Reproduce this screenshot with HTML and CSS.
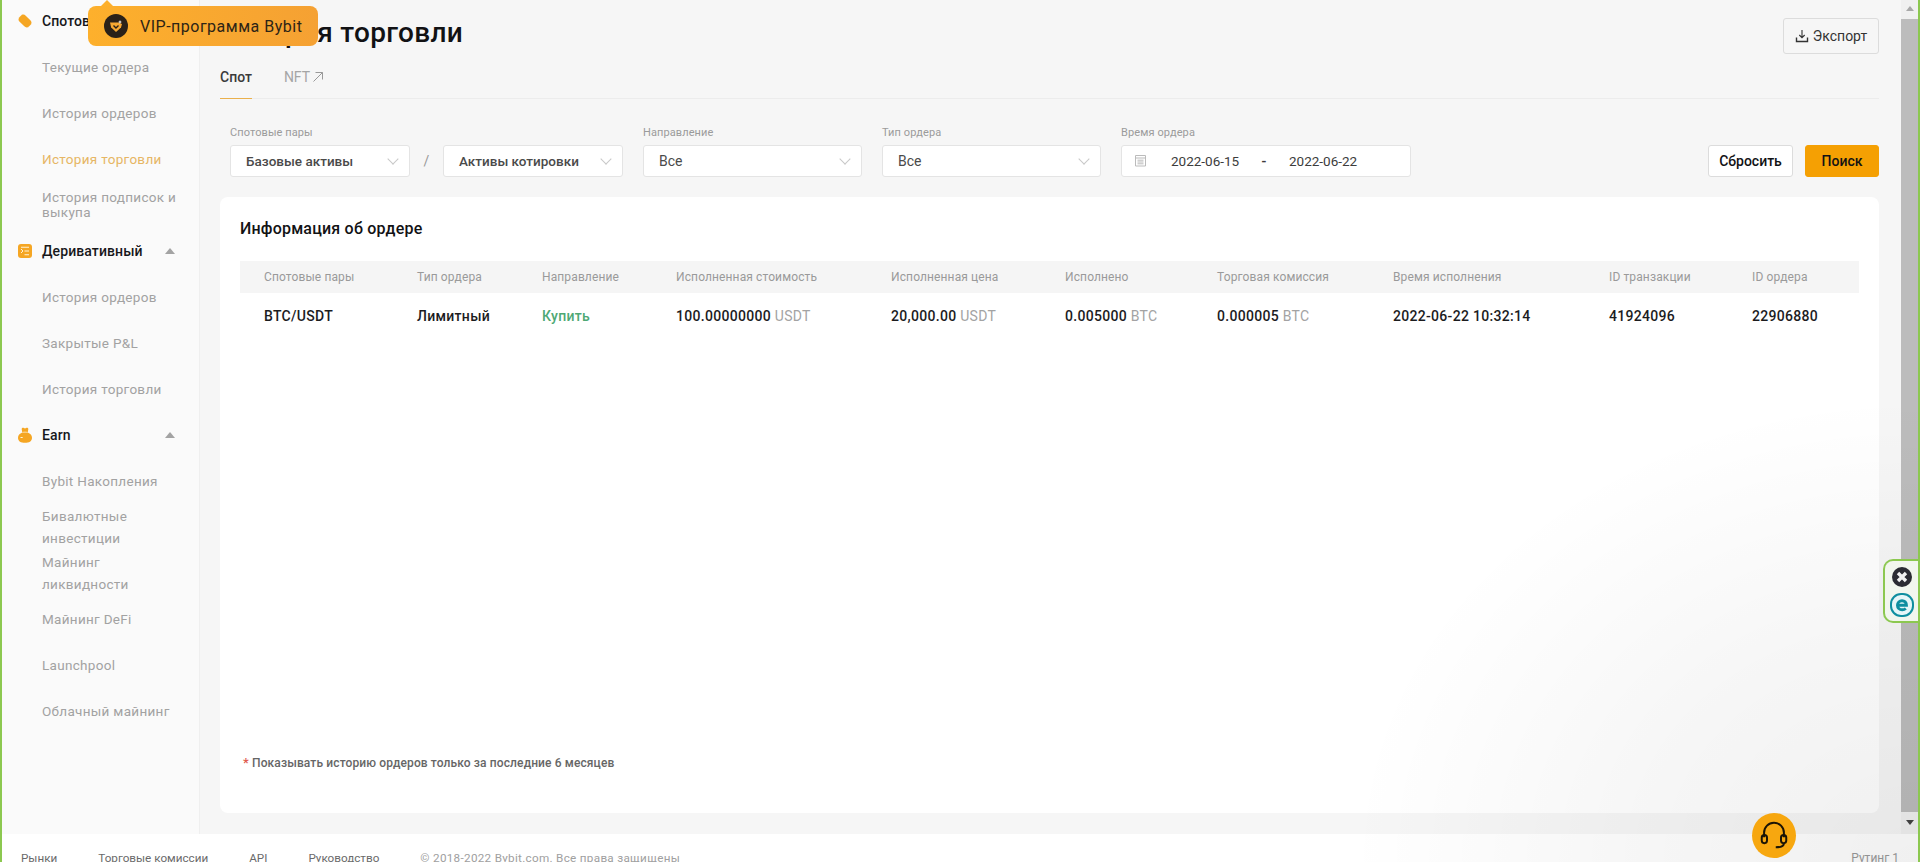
FILE: index.html
```html
<!DOCTYPE html>
<html lang="ru">
<head>
<meta charset="utf-8">
<title>История торговли</title>
<link rel="stylesheet" href="styles.css">
</head>
<body>
<div class="app">
  <div class="workspace">
    <aside class="sidebar">
      <div class="nav-head">
        <svg class="nav-icon" viewBox="0 0 14 16"><g fill="#f5a623"><rect x="0.500" y="3.700" width="13" height="8.600" rx="3.200" transform="rotate(45 7 8)"/><path d="M1.300 5.800 5 2 4.200 1.200.500 5zM12.700 10.200 9 14l.8.8L13.500 11z" opacity=".6"/></g></svg>
        <span>Спотовый</span>
      </div>
      <a class="nav-item">Текущие ордера</a>
      <a class="nav-item">История ордеров</a>
      <a class="nav-item active">История торговли</a>
      <a class="nav-item tight">История подписок и выкупа</a>
      <div class="nav-head">
        <svg class="nav-icon" viewBox="0 0 14 14"><rect width="14" height="14" rx="3" fill="#f5a623"/><path d="M3 5l2 2-2 2" fill="none" stroke="#fff3d6" stroke-width="1"/><path d="M3 3.200h8M6.500 7h4.500M6.500 10.800h4.500" stroke="#fff3d6" stroke-width="1.100"/></svg>
        <span>Деривативный</span>
        <i class="caret"></i>
      </div>
      <a class="nav-item">История ордеров</a>
      <a class="nav-item">Закрытые P&amp;L</a>
      <a class="nav-item">История торговли</a>
      <div class="nav-head">
        <svg class="nav-icon" viewBox="0 0 14 16"><path d="M4.300 5.500 3.700 2.200C3.500 1 4.600.4 5.500.800L7 1.400 8.500.800C9.400.4 10.500 1 10.300 2.200L9.700 5.500C12.300 6.500 14 8.300 14 10.700 14 14.300 11 15.800 7 15.800S0 14.300 0 10.700C0 8.300 1.700 6.500 4.300 5.500Z" fill="#f5a623"/><path d="M4.500 5.500C6 5 8 5 9.500 5.500" stroke="#fff3d6" stroke-width=".8" fill="none"/><path d="M2.500 10.500h2.200" stroke="#fff3d6"/></svg>
        <span>Earn</span>
        <i class="caret"></i>
      </div>
      <a class="nav-item">Bybit Накопления</a>
      <a class="nav-item loose">Бивалютные инвестиции</a>
      <a class="nav-item loose">Майнинг ликвидности</a>
      <a class="nav-item">Майнинг DeFi</a>
      <a class="nav-item">Launchpool</a>
      <a class="nav-item">Облачный майнинг</a>
    </aside>

    <main class="main">
      <header class="page-head">
        <h1 class="page-title">История торговли</h1>
        <button class="btn btn-export">
          <svg class="export-icon" viewBox="0 0 14 14"><path d="M7 1v7.500M4.300 6 7 8.700 9.700 6" fill="none" stroke="#333" stroke-width="1.100"/><path d="M1.500 8.500V12.500H12.500V8.500" fill="none" stroke="#333" stroke-width="1.400"/></svg>
          Экспорт
        </button>
      </header>

      <nav class="tabs">
        <a class="tab current">Спот</a>
        <a class="tab">NFT
          <svg class="tab-arrow" viewBox="0 0 12 12"><path d="M1.500 10.500 10.500 1.500M3.500 1.500h7v7" fill="none" stroke="#999" stroke-width="1"/></svg>
        </a>
      </nav>

      <section class="filters">
        <div class="field">
          <label class="field-label">Спотовые пары</label>
          <div class="pair">
            <div class="select strong"><span>Базовые активы</span><i class="chevron"></i></div>
            <span class="slash">/</span>
            <div class="select strong"><span>Активы котировки</span><i class="chevron"></i></div>
          </div>
        </div>
        <div class="field">
          <label class="field-label">Направление</label>
          <div class="select wide"><span>Все</span><i class="chevron"></i></div>
        </div>
        <div class="field">
          <label class="field-label">Тип ордера</label>
          <div class="select wide"><span>Все</span><i class="chevron"></i></div>
        </div>
        <div class="field">
          <label class="field-label">Время ордера</label>
          <div class="date-range">
            <svg class="cal-icon" viewBox="0 0 13 13"><path d="M1.500 1.500h10v10.500h-10zM1.500 4h10M3.500 6.200h6M3.500 8h6M3.500 9.800h6" fill="none" stroke="#bbb" stroke-width="1"/></svg>
            <span class="date">2022-06-15</span>
            <span class="date-sep">-</span>
            <span class="date">2022-06-22</span>
          </div>
        </div>
        <div class="actions">
          <button class="btn btn-reset">Сбросить</button>
          <button class="btn btn-search">Поиск</button>
        </div>
      </section>

      <section class="card">
        <h2 class="card-title">Информация об ордере</h2>
        <div class="row row-head">
          <span>Спотовые пары</span><span>Тип ордера</span><span>Направление</span><span>Исполненная стоимость</span><span>Исполненная цена</span><span>Исполнено</span><span>Торговая комиссия</span><span>Время исполнения</span><span>ID транзакции</span><span>ID ордера</span>
        </div>
        <div class="row row-body">
          <span>BTC/USDT</span><span>Лимитный</span><span class="buy">Купить</span><span>100.00000000 <em>USDT</em></span><span>20,000.00 <em>USDT</em></span><span>0.005000 <em>BTC</em></span><span>0.000005 <em>BTC</em></span><span>2022-06-22 10:32:14</span><span>41924096</span><span>22906880</span>
        </div>
        <p class="note"><b>*</b> Показывать историю ордеров только за последние 6 месяцев</p>
      </section>
    </main>

    <div class="scrollbar">
      <i class="sb-up"></i>
      <div class="sb-thumb"></div>
      <i class="sb-down"></i>
    </div>
  </div>

  <footer class="footer">
    <a>Рынки</a><a>Торговые комиссии</a><a>API</a><a>Руководство</a>
    <span class="copyright">© 2018-2022 Bybit.com. Все права защищены</span>
    <span class="routing">Рутинг 1</span>
  </footer>

  <div class="shade"></div>

  <div class="vip">
    <svg class="vip-icon" viewBox="0 0 24 24"><circle cx="12" cy="12" r="12" fill="#2a2118"/><path d="M6 8.500h8.500l3.500 1.500-1 3.500L12 18l-4.800-4.500z" fill="#f7a832"/><path d="M9.500 11.500 12 14l2.500-2.500" fill="none" stroke="#2a2118" stroke-width="1.400"/><path d="M16 6l.6 1.400L18 8l-1.400.6L16 10l-.6-1.400L14 8l1.400-.6z" fill="#fff"/></svg>
    <span>VIP-программа Bybit</span>
  </div>

  <div class="eset">
    <svg class="eset-close" viewBox="0 0 20 20"><circle cx="10" cy="10" r="10" fill="#2b2b33"/><path d="M6 6l8 8M14 6l-8 8" stroke="#f1f1f1" stroke-width="3.400"/></svg>
    <svg class="eset-logo" viewBox="0 0 24 24"><rect x="1" y="1" width="22" height="22" rx="10" fill="#e6f6f8" stroke="#0f8ea0" stroke-width="2"/><path d="M7.800 12.300h8.600c0-3-1.900-4.600-4.400-4.600S7.500 9.600 7.500 12.200 9.400 16.800 12.200 16.800c1.500 0 2.700-.5 3.600-1.300" fill="none" stroke="#0f8ea0" stroke-width="3"/></svg>
  </div>

  <button class="support">
    <svg viewBox="2 2 24 24" class="support-icon"><path d="M5.500 16V12a8.500 8.500 0 0 1 17 0v4" fill="none" stroke="#1b1405" stroke-width="1.700"/><rect x="3.500" y="14" width="4.500" height="7" rx="2.200" fill="none" stroke="#1b1405" stroke-width="1.700"/><rect x="20" y="14" width="4.500" height="7" rx="2.200" fill="none" stroke="#1b1405" stroke-width="1.700"/><path d="M22.500 21c0 3-2.500 3.500-7 3.500" fill="none" stroke="#1b1405" stroke-width="1.700"/></svg>
  </button>
</div>
</body>
</html>
```
FILE: styles.css
```css
* { box-sizing: border-box; }
html, body { margin: 0; height: 100%; overflow: hidden; }
body { font-family: Roboto, "Liberation Sans", sans-serif; color: #121214; background: #fff; }

.app {
  position: relative;
  height: 862px;
  overflow: hidden;
  display: flex;
  flex-direction: column;
  border-left: 2px solid #8cc850;
  border-right: 2px solid #8cc850;
}
.workspace { display: flex; height: 834px; flex: none; }

/* sidebar */
.sidebar {
  width: 198px;
  flex: none;
  background: #fafafa;
  border-right: 1px solid #efefef;
  overflow: hidden;
}
.nav-head {
  height: 46px;
  display: flex;
  align-items: center;
  padding-left: 16px;
  font-size: 14px;
  font-weight: 500;
  letter-spacing: .1px;
  color: #17171a;
}
.sidebar > :first-child { margin-top: -2px; }
.nav-icon { width: 14px; height: 16px; margin-right: 10px; flex: none; }
.caret {
  margin-left: auto;
  margin-right: 24px;
  width: 0; height: 0;
  border-left: 5.500px solid transparent;
  border-right: 5.500px solid transparent;
  border-bottom: 6px solid #a3a3a3;
}
.nav-item {
  height: 46px;
  display: flex;
  align-items: center;
  padding: 0 18px 0 40px;
  font-size: 13.500px;
  line-height: 22.500px;
  color: #a2a2a2;
  letter-spacing: .3px;
}
.nav-item.tight { line-height: 15.500px; }
.nav-item.loose { line-height: 22.500px; padding-right: 40px; }
.nav-item.active { color: #e6b664; }

/* main */
.main {
  flex: 1;
  min-width: 0;
  display: flex;
  flex-direction: column;
  padding: 18px 22px 21px 20px;
  background: #f6f6f6;
}
.page-head { display: flex; justify-content: space-between; align-items: flex-start; height: 36px; flex: none; }
.page-title { margin: 0; font-size: 28px; line-height: 30px; font-weight: 500; letter-spacing: .3px; }

.btn {
  font-family: inherit;
  font-size: 14px;
  font-weight: 500;
  color: #121214;
  background: #fff;
  border: 1px solid #dcdcdc;
  border-radius: 3px;
  display: flex;
  align-items: center;
  justify-content: center;
  padding: 0;
}
.btn-export { width: 96px; height: 36px; background: #f6f6f6; gap: 4px; color: #333; font-weight: 400; }
.export-icon { width: 14px; height: 14px; }

.tabs {
  display: flex;
  gap: 32px;
  height: 45px;
  flex: none;
  border-bottom: 1px solid #ececec;
}
.tab {
  display: flex;
  align-items: center;
  height: 45px;
  padding-top: 1px;
  font-size: 14px;
  color: #a5a5a5;
  gap: 2px;
}
.tab.current { color: #3b3b3b; font-weight: 500; border-bottom: 1px solid #eab04c; }
.tab-arrow { width: 12px; height: 12px; }

.filters { display: flex; align-items: flex-end; gap: 20px; margin-top: 27px; padding-left: 10px; flex: none; }
.field { display: flex; flex-direction: column; gap: 5px; }
.field-label { font-size: 11px; line-height: 14px; color: #9b9b9b; letter-spacing: .1px; }
.pair { display: flex; align-items: center; }
.slash { width: 33px; text-align: center; color: #999; font-size: 14px; }
.select {
  width: 180px;
  height: 32px;
  display: flex;
  align-items: center;
  justify-content: space-between;
  padding: 0 10px 1px 15px;
  background: #fff;
  border: 1px solid #e4e4e4;
  border-radius: 3px;
  font-size: 13.500px;
  color: #4a4a4a;
}
.select.strong { font-weight: 500; }
.select.wide { width: 219px; font-size: 14px; }
.chevron {
  width: 8px; height: 8px;
  margin: -4px 2px 0 0;
  border-right: 1px solid #c8c8c8;
  border-bottom: 1px solid #c8c8c8;
  transform: rotate(45deg);
}
.date-range {
  width: 290px;
  height: 32px;
  display: flex;
  align-items: center;
  padding: 0 0 1px 12px;
  background: #fff;
  border: 1px solid #e4e4e4;
  border-radius: 3px;
  font-size: 13.500px;
  color: #3c3c3c;
}
.cal-icon { width: 13px; height: 13px; margin-right: 24px; }
.date { width: 68px; white-space: nowrap; }
.date-sep { width: 50px; text-align: center; font-weight: 700; }
.actions { display: flex; gap: 12px; margin-left: auto; }
.btn-reset { width: 85px; height: 32px; }
.btn-search { width: 74px; height: 32px; background: #f5a003; border-color: #f5a003; }

/* card */
.card {
  flex: 1;
  min-height: 0;
  margin-top: 20px;
  padding: 0 20px 42px;
  background: #fff;
  border-radius: 8px;
  display: flex;
  flex-direction: column;
}
.card-title { margin: 21px 0 21px; font-size: 16px; line-height: 22px; font-weight: 500; letter-spacing: .2px; }
.row {
  display: grid;
  grid-template-columns: 153px 125px 134px 215px 174px 152px 176px 216px 143px 1fr;
  padding-left: 24px;
  align-items: center;
}
.row-head { height: 32px; background: #f5f5f5; font-size: 12px; color: #9a9a9a; letter-spacing: .12px; }
.row-body { height: 46px; font-size: 14px; font-weight: 500; letter-spacing: .3px; color: #1c1c1e; }
.row-body em { font-style: normal; color: #a3a3a3; font-weight: 400; }
.row-body .buy { color: #4ea874; }
.note { margin: auto 0 0; padding-left: 3px; font-size: 12px; line-height: 16px; font-weight: 500; letter-spacing: .12px; color: #666; }
.note b { color: #e05a4e; font-weight: 500; font-size: 13px; }

/* scrollbar */
.scrollbar {
  width: 17px;
  flex: none;
  display: flex;
  flex-direction: column;
  align-items: center;
  background: #f0f0f0;
}
.sb-up, .sb-down {
  width: 0; height: 0;
  border-left: 4px solid transparent;
  border-right: 4px solid transparent;
  flex: none;
}
.sb-up { border-bottom: 5px solid #a8a8a8; margin: 6px 0 8px; }
.sb-thumb { width: 100%; flex: 1; background: #bcbcbc; }
.sb-down { border-top: 5px solid #444; margin: 8px 0 9px; }

/* footer */
.footer {
  flex: 1;
  display: flex;
  gap: 41px;
  padding: 16px 0 0 19px;
  font-size: 11.700px;
  line-height: 16px;
  color: #6a6a6a;
  background: #fff;
}
.copyright { color: #a0a0a0; letter-spacing: .3px; }
.routing { margin-left: auto; margin-right: 19px; color: #9a9a9a; font-size: 12px; }

/* overlays */
.shade {
  position: absolute;
  right: 0; bottom: 0;
  width: 560px; height: 460px;
  pointer-events: none;
  background: radial-gradient(ellipse at 100% 100%, rgba(0,0,0,.06) 0, rgba(0,0,0,.035) 35%, rgba(0,0,0,0) 72%);
}
.vip {
  position: absolute;
  left: 86px; top: 6px;
  width: 230px; height: 40px;
  display: flex;
  align-items: center;
  padding-left: 16px;
  gap: 12px;
  border-radius: 8px;
  background: linear-gradient(90deg, #fdb02c, #f5a133);
  font-size: 16px;
  letter-spacing: .5px;
  color: #2d2416;
}
.vip::before {
  content: "";
  position: absolute;
  left: 13px; top: -6px;
  width: 0; height: 0;
  border-left: 6px solid transparent;
  border-right: 6px solid transparent;
  border-bottom: 6px solid #fdb02c;
}
.vip-icon { width: 24px; height: 24px; flex: none; }
.eset {
  position: absolute;
  right: 0; top: 559px;
  width: 35px; height: 64px;
  display: flex;
  flex-direction: column;
  align-items: center;
  gap: 6px;
  padding: 6px 0 0 1px;
  background: #f2f6ee;
  border: 2px solid #8cc850;
  border-right: 0;
  border-radius: 10px 0 0 10px;
}
.eset-close { width: 20px; height: 20px; }
.eset-logo { width: 24px; height: 24px; }
.support {
  position: absolute;
  right: 122px; top: 813px;
  width: 44px; height: 45px;
  border: 0;
  border-radius: 50%;
  background: #f7a70f;
  padding: 8px;
  display: flex;
}
.support-icon { width: 28px; height: 28px; }
```
